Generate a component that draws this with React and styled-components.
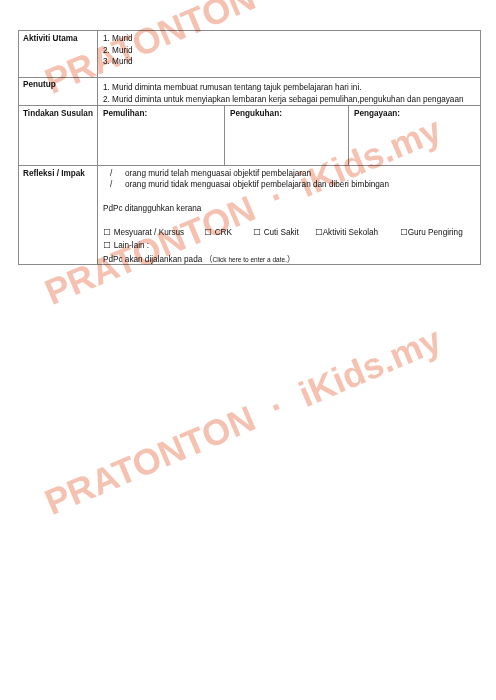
import styled, { createGlobalStyle } from "styled-components";

const GlobalStyles = createGlobalStyle`
  html, body {
    margin: 0;
    padding: 0;
    background: #ffffff;
  }
  body {
    font-family: "Liberation Sans", Arial, "Noto Sans CJK SC", sans-serif;
    color: #111;
  }
`;

const Page = styled.main`
  position: relative;
  width: 496px;
  height: 700px;
  overflow: hidden;
  padding: 30px 0 0 18px;
  box-sizing: border-box;
`;

const Table = styled.div`
  width: 463px;
  display: grid;
  grid-template-columns: 79px 1fr;
  border: 1px solid #8a8a8a;
  box-sizing: border-box;
  font-size: 8.2px;
  line-height: 11.5px;
`;

const Label = styled.div`
  font-weight: 700;
  white-space: nowrap;
  padding: ${(p) => p.$pad || "2px 3px 0 4px"};
  height: ${(p) => p.$h}px;
  box-sizing: border-box;
  border-right: 1px solid #8a8a8a;
  border-bottom: ${(p) => (p.$last ? "none" : "1px solid #8a8a8a")};
`;

const Cell = styled.div`
  padding: ${(p) => p.$pad || "2px 5px 0 5px"};
  height: ${(p) => p.$h}px;
  box-sizing: border-box;
  border-bottom: ${(p) => (p.$last ? "none" : "1px solid #8a8a8a")};
`;

const SplitCell = styled.div`
  display: grid;
  grid-template-columns: 127px 124px 1fr;
  height: 60px;
  box-sizing: border-box;
  border-bottom: 1px solid #8a8a8a;
`;

const SubCell = styled.div`
  font-weight: 700;
  padding: 2px 5px 0 5px;
  border-right: ${(p) => (p.$last ? "none" : "1px solid #8a8a8a")};
`;

const Line = styled.div`
  height: ${(p) => p.$h || 11.5}px;
  white-space: nowrap;
`;

const MarkLine = styled.div`
  display: flex;
  height: 11px;
  white-space: nowrap;
`;

const Slash = styled.span`
  width: 22px;
  padding-left: 7px;
  box-sizing: border-box;
`;

const CheckRow = styled.div`
  display: flex;
  height: 13px;
  white-space: nowrap;
`;

const Check = styled.span`
  width: ${(p) => (p.$w ? `${p.$w}px` : "auto")};
  flex: none;
`;

const Box = styled.span`
  font-family: "DejaVu Sans", sans-serif;
  font-size: 8.5px;
  margin-right: ${(p) => (p.$tight ? "0" : "3px")};
`;

const DateHint = styled.span`
  font-size: 6.5px;
  font-family: "Liberation Sans", "Noto Sans CJK SC", sans-serif;
`;

const Paren = styled.span`
  font-family: "Noto Sans CJK SC", sans-serif;
  font-size: 8px;
`;

const Watermark = styled.div`
  position: absolute;
  left: ${(p) => p.$x}px;
  top: ${(p) => p.$y}px;
  transform-origin: 0 100%;
  transform: rotate(-23deg);
  font-family: "Liberation Sans", Arial, sans-serif;
  font-weight: 700;
  font-size: 36px;
  line-height: 36px;
  white-space: pre;
  color: #f2ad97;
  opacity: 0.75;
  mix-blend-mode: multiply;
  pointer-events: none;
`;

function CheckItem({ w, tight, children }) {
  return (
    <Check $w={w}>
      <Box $tight={tight}>☐</Box>
      {children}
    </Check>
  );
}

export default function App() {
  return (
    <>
      <GlobalStyles />
      <Page>
        <Table>
          <Label $h={47}>Aktiviti Utama</Label>
          <Cell $h={47}>
            <Line>1. Murid</Line>
            <Line>2. Murid</Line>
            <Line>3. Murid</Line>
          </Cell>

          <Label $h={28} $pad="1px 3px 0 4px">Penutup</Label>
          <Cell $h={28} $pad="4px 5px 0 5px">
            <Line>1. Murid diminta membuat rumusan tentang tajuk pembelajaran hari ini.</Line>
            <Line>2. Murid diminta untuk menyiapkan lembaran kerja sebagai pemulihan,pengukuhan dan pengayaan</Line>
          </Cell>

          <Label $h={60}>Tindakan Susulan</Label>
          <SplitCell>
            <SubCell>Pemulihan:</SubCell>
            <SubCell>Pengukuhan:</SubCell>
            <SubCell $last>Pengayaan:</SubCell>
          </SplitCell>

          <Label $h={98} $last>Refleksi / Impak</Label>
          <Cell $h={98} $last>
            <MarkLine>
              <Slash>/</Slash>orang murid telah menguasai objektif pembelajaran
            </MarkLine>
            <MarkLine>
              <Slash>/</Slash>orang murid tidak menguasai objektif pembelajaran dan diberi bimbingan
            </MarkLine>
            <Line $h={13} />
            <Line $h={24}>PdPc ditangguhkan kerana</Line>
            <CheckRow>
              <CheckItem w={101}>Mesyuarat / Kursus</CheckItem>
              <CheckItem w={49}>CRK</CheckItem>
              <CheckItem w={62}>Cuti Sakit</CheckItem>
              <CheckItem w={85} tight>Aktiviti Sekolah</CheckItem>
              <CheckItem tight>Guru Pengiring</CheckItem>
            </CheckRow>
            <CheckRow>
              <CheckItem>Lain-lain :</CheckItem>
            </CheckRow>
            <Line>
              PdPc akan dijalankan pada <Paren>（</Paren>
              <DateHint>Click here to enter a date.</DateHint>
              <Paren>）</Paren>
            </Line>
          </Cell>
        </Table>

        <Watermark $x={54} $y={64}>{"PRATONTON  ·  iKids.my"}</Watermark>
        <Watermark $x={54} $y={275}>{"PRATONTON  ·  iKids.my"}</Watermark>
        <Watermark $x={54} $y={485}>{"PRATONTON  ·  iKids.my"}</Watermark>
      </Page>
    </>
  );
}
